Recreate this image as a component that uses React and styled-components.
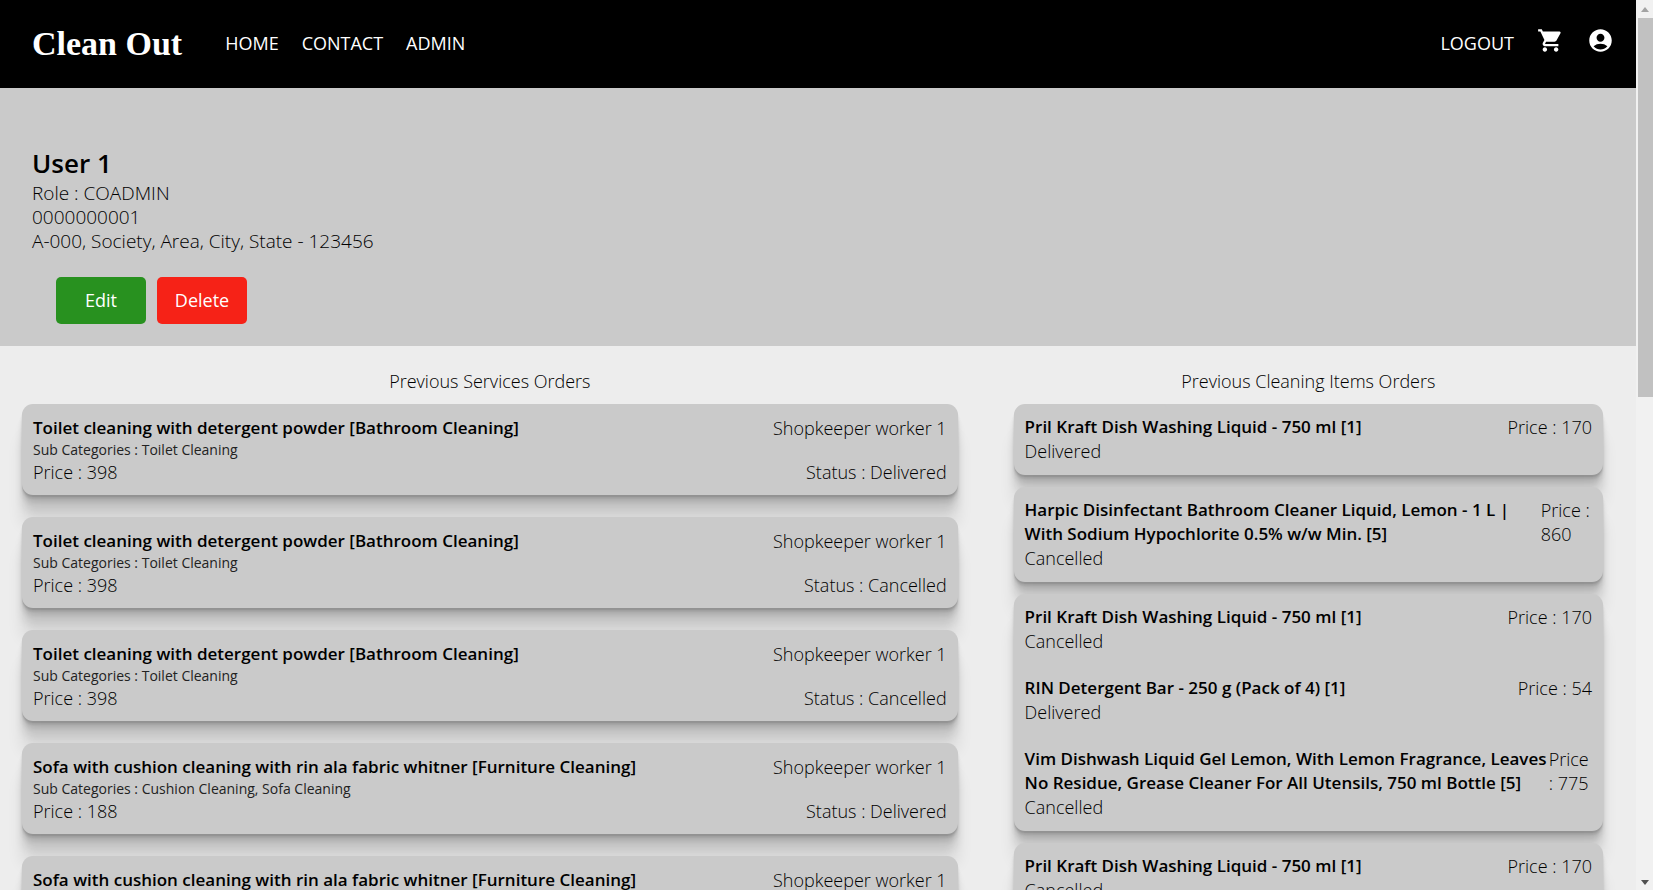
import React from "react";
import styled, { createGlobalStyle } from "styled-components";
import { MdShoppingCart, MdAccountCircle } from "react-icons/md";

const GlobalStyle = createGlobalStyle`
  *, *::before, *::after { box-sizing: border-box; }
  body {
    margin: 0;
    background: #ededed;
    color: #000;
    font-family: "Open Sans", "Noto Sans", sans-serif;
    font-size: 18px;
    font-weight: 300;
    line-height: 24px;
  }
  h1, h2, h3, p, ul { margin: 0; padding: 0; }
  ul { list-style: none; }
`;

const Shell = styled.div`
  display: flex;
  height: 100vh;
`;

const Page = styled.div`
  flex: 1;
  min-width: 0;
  overflow-y: auto;
  scrollbar-width: none;
`;

const Navbar = styled.header`
  display: flex;
  align-items: center;
  justify-content: space-between;
  height: 88px;
  padding: 0 22px 0 32px;
  background: #000;
  color: #fff;
`;

const NavGroup = styled.nav`
  display: flex;
  align-items: center;
  gap: 23px;
`;

const Brand = styled.a`
  margin-right: 20px;
  color: #fff;
  font-family: "Liberation Serif", serif;
  font-size: 34px;
  font-weight: 700;
  line-height: 40px;
  text-decoration: none;
`;

const NavLink = styled.a`
  padding-bottom: 2px;
  color: #fff;
  font-weight: 400;
  text-decoration: none;
`;

const IconLink = styled.a`
  display: flex;
  padding-bottom: 7px;
  color: #fff;
`;

const Profile = styled.section`
  padding: 59px 32px 22px;
  background: #cacaca;
`;

const UserName = styled.h1`
  margin-bottom: 2px;
  font-size: 26px;
  font-weight: 600;
  line-height: 32px;
`;

const Detail = styled.p`
  font-size: 19px;
`;

const Actions = styled.div`
  display: flex;
  gap: 11px;
  padding: 24px 24px 0;
`;

const ActionButton = styled.button`
  width: 90px;
  height: 47px;
  padding: 0 0 2px;
  border: 0;
  border-radius: 5px;
  background: ${(p) => p.$color};
  color: #fff;
  font: inherit;
  font-weight: 400;
  cursor: pointer;
`;

const Orders = styled.main`
  display: grid;
  grid-template-columns: 3fr 2fr;
`;

const Column = styled.section`
  min-width: 0;
  padding: ${(p) => p.$padding};
`;

const ColumnTitle = styled.h2`
  margin-bottom: 11px;
  font-size: 18px;
  font-weight: 300;
  text-align: center;
`;

const CardList = styled.ul`
  display: flex;
  flex-direction: column;
  gap: ${(p) => p.$gap};
`;

const Card = styled.li`
  border-radius: 11px;
  background: #cacaca;
  box-shadow:
    0 2px 1px rgba(0, 0, 0, 0.09),
    0 4px 2px rgba(0, 0, 0, 0.09),
    0 8px 4px rgba(0, 0, 0, 0.09),
    0 16px 8px rgba(0, 0, 0, 0.09),
    0 32px 16px rgba(0, 0, 0, 0.09);
`;

const Entry = styled.div`
  padding: ${(p) => p.$padding};
`;

const Line = styled.div`
  display: flex;
  justify-content: space-between;
`;

const Title = styled.h3`
  font-size: 17px;
  font-weight: 600;
  line-height: 24px;
`;

const SubCategories = styled.p`
  color: #222;
  font-size: 14px;
  font-weight: 400;
  line-height: 20px;
`;

const Track = styled.div`
  flex: none;
  display: flex;
  flex-direction: column;
  align-items: flex-end;
  width: 17px;
  background: #f1f1f1;
`;

const Arrow = styled.svg`
  width: 17px;
  height: 18px;
  fill: ${(p) => p.$fill};
`;

const Rail = styled.div`
  flex: 1;
  width: 15px;
`;

const Thumb = styled.div`
  height: 44.4%;
  background: #c1c1c1;
`;

const toilet = {
  title: "Toilet cleaning with detergent powder [Bathroom Cleaning]",
  sub: "Toilet Cleaning",
  price: 398,
};
const sofa = {
  title: "Sofa with cushion cleaning with rin ala fabric whitner [Furniture Cleaning]",
  sub: "Cushion Cleaning, Sofa Cleaning",
  price: 188,
};
const services = [
  { ...toilet, status: "Delivered" },
  { ...toilet, status: "Cancelled" },
  { ...toilet, status: "Cancelled" },
  { ...sofa, status: "Delivered" },
  { ...sofa, status: "Delivered" },
];

const pril = { title: "Pril Kraft Dish Washing Liquid - 750 ml [1]", price: 170 };
const itemOrders = [
  [{ ...pril, status: "Delivered" }],
  [
    {
      title:
        "Harpic Disinfectant Bathroom Cleaner Liquid, Lemon - 1 L | With Sodium Hypochlorite 0.5% w/w Min. [5]",
      price: 860,
      status: "Cancelled",
    },
  ],
  [
    { ...pril, status: "Cancelled" },
    { title: "RIN Detergent Bar - 250 g (Pack of 4) [1]", price: 54, status: "Delivered" },
    {
      title:
        "Vim Dishwash Liquid Gel Lemon, With Lemon Fragrance, Leaves No Residue, Grease Cleaner For All Utensils, 750 ml Bottle [5]",
      price: 775,
      status: "Cancelled",
    },
  ],
  [{ ...pril, status: "Cancelled" }],
];

function ServiceCard({ order }) {
  return (
    <Card>
      <Entry $padding="12px 11px 11px">
        <Line>
          <Title>{order.title}</Title>
          <span>Shopkeeper worker 1</span>
        </Line>
        <SubCategories>Sub Categories : {order.sub}</SubCategories>
        <Line>
          <span>Price : {order.price}</span>
          <span>Status : {order.status}</span>
        </Line>
      </Entry>
    </Card>
  );
}

function ItemCard({ items }) {
  return (
    <Card>
      {items.map((item) => (
        <Entry key={item.title} $padding="11px 11px 12px">
          <Line>
            <Title>{item.title}</Title>
            <span>Price : {item.price}</span>
          </Line>
          <p>{item.status}</p>
        </Entry>
      ))}
    </Card>
  );
}

export default function App() {
  return (
    <Shell>
      <GlobalStyle />
      <Page>
        <Navbar>
          <NavGroup>
            <Brand href="#">Clean Out</Brand>
            <NavLink href="#">HOME</NavLink>
            <NavLink href="#">CONTACT</NavLink>
            <NavLink href="#">ADMIN</NavLink>
          </NavGroup>
          <NavGroup>
            <NavLink href="#">LOGOUT</NavLink>
            <IconLink href="#" aria-label="Cart">
              <MdShoppingCart size={27} />
            </IconLink>
            <IconLink href="#" aria-label="Account">
              <MdAccountCircle size={27} />
            </IconLink>
          </NavGroup>
        </Navbar>
        <Profile>
          <UserName>User 1</UserName>
          <Detail>Role : COADMIN</Detail>
          <Detail>0000000001</Detail>
          <Detail>A-000, Society, Area, City, State - 123456</Detail>
          <Actions>
            <ActionButton type="button" $color="#28911f">Edit</ActionButton>
            <ActionButton type="button" $color="#f62217">Delete</ActionButton>
          </Actions>
        </Profile>
        <Orders>
          <Column $padding="23px 24px 23px 22px">
            <ColumnTitle>Previous Services Orders</ColumnTitle>
            <CardList $gap="22px">
              {services.map((order, i) => (
                <ServiceCard key={i} order={order} />
              ))}
            </CardList>
          </Column>
          <Column $padding="23px 33px 23px 32px">
            <ColumnTitle>Previous Cleaning Items Orders</ColumnTitle>
            <CardList $gap="12px">
              {itemOrders.map((items, i) => (
                <ItemCard key={i} items={items} />
              ))}
            </CardList>
          </Column>
        </Orders>
      </Page>
      <Track aria-hidden="true">
        <Arrow viewBox="0 0 17 18" $fill="#a3a3a3">
          <path d="M5 12 9 7l4 5z" />
        </Arrow>
        <Rail>
          <Thumb />
        </Rail>
        <Arrow viewBox="0 0 17 18" $fill="#505050">
          <path d="M5 8h8l-4 5z" />
        </Arrow>
      </Track>
    </Shell>
  );
}
